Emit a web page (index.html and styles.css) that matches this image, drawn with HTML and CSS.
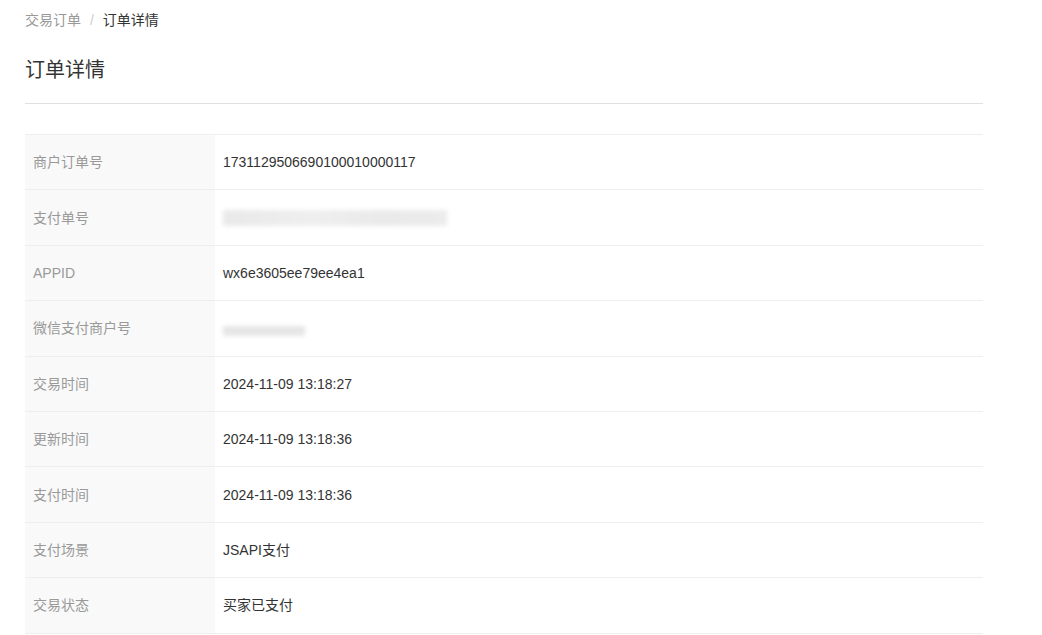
FILE: index.html
```html
<!DOCTYPE html>
<html lang="zh-CN">
<head>
  <meta charset="UTF-8">
  <title>订单详情</title>
  <link rel="stylesheet" href="styles.css">
</head>
<body>
  <div class="page">
    <div class="breadcrumb">
      <span class="crumb">交易订单</span>
      <span class="sep">/</span>
      <span class="crumb current">订单详情</span>
    </div>

    <h1 class="title">订单详情</h1>
    <div class="divider"></div>

    <table class="detail">
      <tr><td class="label">商户订单号</td><td class="value">1731129506690100010000117</td></tr>
      <tr><td class="label">支付单号</td><td class="value"><span class="mask mask-long"></span></td></tr>
      <tr><td class="label">APPID</td><td class="value">wx6e3605ee79ee4ea1</td></tr>
      <tr><td class="label">微信支付商户号</td><td class="value"><span class="mask mask-short"></span></td></tr>
      <tr><td class="label">交易时间</td><td class="value">2024-11-09 13:18:27</td></tr>
      <tr><td class="label">更新时间</td><td class="value">2024-11-09 13:18:36</td></tr>
      <tr><td class="label">支付时间</td><td class="value">2024-11-09 13:18:36</td></tr>
      <tr><td class="label">支付场景</td><td class="value">JSAPI支付</td></tr>
      <tr><td class="label">交易状态</td><td class="value">买家已支付</td></tr>
    </table>
  </div>
</body>
</html>
```

FILE: styles.css
```css
html, body {
  margin: 0;
  background: #fff;
}

body {
  font-family: "Liberation Sans", "Noto Sans CJK SC", sans-serif;
  font-size: 14px;
  color: #333;
}

.page {
  width: 958px;
  padding: 10px 25px 0;
}

.breadcrumb {
  height: 20px;
  line-height: 20px;
  font-size: 14px;
}

.crumb {
  color: #999;
}

.crumb.current {
  color: #333;
}

.sep {
  color: #ccc;
  margin: 0 5px;
}

.title {
  margin: 26px 0 0;
  font-size: 20px;
  font-weight: normal;
  line-height: 28px;
  color: #333;
}

.divider {
  height: 1px;
  background: #e0e0e0;
  margin-top: 19px;
}

.detail {
  width: 100%;
  margin-top: 30px;
  border-collapse: collapse;
}

.detail td {
  height: 54.4px;
  padding: 0 8px;
  border-top: 1px solid #eee;
  border-bottom: 1px solid #eee;
  vertical-align: middle;
  line-height: 20px;
}

.detail .label {
  width: 174px;
  background: #f9f9f9;
  color: #999;
}

.detail .value {
  color: #333;
}

.mask {
  display: block;
  background: #ececec;
  filter: blur(2px);
}

.mask-long {
  width: 224px;
  height: 16px;
  background: linear-gradient(90deg, #e9e9e9, #efefef 40%, #eaeaea 70%, #ececec);
}

.mask-short {
  width: 82px;
  height: 10px;
  margin-top: 6px;
  background: #e6e6e6;
}
```
